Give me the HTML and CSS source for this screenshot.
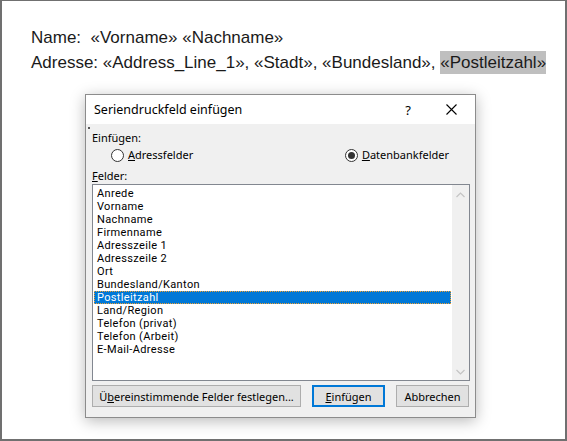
FILE: index.html
```html
<!DOCTYPE html>
<html lang="de">
<head>
    <meta charset="UTF-8">
    <title>Seriendruckfeld einfügen</title>
    <link rel="stylesheet" href="styles.css">
</head>
<body>

    <div id="page">
        <div class="doc-line">Name:&nbsp;&nbsp;«Vorname» «Nachname»</div>
        <div class="doc-line">Adresse: «Address_Line_1», «Stadt», «Bundesland», <span class="field-hl">«Postleitzahl»</span></div>

        <div id="dialog">
            <div id="titlebar">
                <span class="title">Seriendruckfeld einfügen</span>
                <span class="help">?</span>
                <svg class="close" width="11" height="11" viewBox="0 0 11 11">
                    <path d="M0.5 0.5 L10.5 10.5 M10.5 0.5 L0.5 10.5" stroke="#000" stroke-width="1.1" fill="none"/>
                </svg>
            </div>

            <div id="dialog-body">
                <div class="grip"></div>
                <div class="group-label">Einfügen:</div>
                <div class="radio-row">
                    <label class="radio"><span class="circle"></span><u>A</u>dressfelder</label>
                    <label class="radio"><span class="circle checked"></span><u>D</u>atenbankfelder</label>
                </div>

                <div class="group-label fields-label"><u>F</u>elder:</div>
                <div id="listbox">
                    <div class="items">
                        <div class="item">Anrede</div>
                        <div class="item">Vorname</div>
                        <div class="item">Nachname</div>
                        <div class="item">Firmenname</div>
                        <div class="item">Adresszeile 1</div>
                        <div class="item">Adresszeile 2</div>
                        <div class="item">Ort</div>
                        <div class="item">Bundesland/Kanton</div>
                        <div class="item selected">Postleitzahl</div>
                        <div class="item">Land/Region</div>
                        <div class="item">Telefon (privat)</div>
                        <div class="item">Telefon (Arbeit)</div>
                        <div class="item">E-Mail-Adresse</div>
                    </div>
                    <div class="scrollbar">
                        <svg width="9" height="6" viewBox="0 0 9 6"><path d="M0.5 5 L4.5 1 L8.5 5" stroke="#c4c4c4" stroke-width="1.2" fill="none"/></svg>
                        <svg width="9" height="6" viewBox="0 0 9 6"><path d="M0.5 1 L4.5 5 L8.5 1" stroke="#c4c4c4" stroke-width="1.2" fill="none"/></svg>
                    </div>
                </div>

                <div class="buttons">
                    <button class="btn btn-wide">Ü<u>b</u>ereinstimmende Felder festlegen...</button>
                    <button class="btn btn-default"><u>E</u>infügen</button>
                    <button class="btn">Abbrechen</button>
                </div>
            </div>
        </div>
    </div>

</body>
</html>
```

FILE: styles.css
```css
body {
    margin: 0;
    padding: 0;
    background-color: #fff;
}

#page {
    width: 567px;
    height: 441px;
    box-sizing: border-box;
    border: 2px solid #707070;
    border-top-width: 1px;
    padding: 24px 0 0 29px;
    font-family: 'Liberation Sans', Arial, sans-serif;
}

.doc-line {
    font-size: 17px;
    line-height: 25px;
    color: #1a1a1a;
    white-space: nowrap;
}

.field-hl {
    background-color: #bfbfbf;
    padding: 2px 0;
}

#dialog {
    width: 391px;
    height: 324px;
    box-sizing: border-box;
    margin: 19px 0 0 54px;
    border: 1px solid #8c8c8c;
    background-color: #f0f0f0;
    box-shadow: 0 3px 14px rgba(0, 0, 0, 0.28);
    font-family: 'Noto Sans', 'Open Sans', sans-serif;
    color: #000;
}

#titlebar {
    height: 29px;
    background-color: #fff;
    display: flex;
    align-items: center;
    padding-left: 8px;
}

#titlebar .title {
    font-size: 12.5px;
    flex: 1;
}

#titlebar .help {
    font-size: 13px;
    margin-right: 35px;
}

#titlebar .close {
    margin-right: 18px;
}

#dialog-body {
    padding: 0 5px 0 6px;
    position: relative;
    font-size: 11px;
}

.grip {
    width: 2px;
    height: 2px;
    background-color: #555;
    position: absolute;
    left: 2px;
    top: 3px;
}

.group-label {
    padding-top: 7px;
    line-height: 14px;
}

.radio-row {
    display: flex;
    justify-content: space-between;
    padding: 3px 21px 0 19px;
    line-height: 14px;
}

.radio {
    display: flex;
    align-items: center;
}

.circle {
    width: 11px;
    height: 11px;
    border: 1px solid #333;
    border-radius: 50%;
    margin-right: 4px;
    box-sizing: content-box;
    display: flex;
    align-items: center;
    justify-content: center;
    background-color: #fff;
}

.circle.checked::after {
    content: "";
    width: 7px;
    height: 7px;
    border-radius: 50%;
    background-color: #333;
}

.fields-label {
    padding-top: 7px;
}

#listbox {
    margin-top: 1px;
    height: 197px;
    box-sizing: border-box;
    border: 1px solid #828790;
    background-color: #fff;
    display: flex;
}

.items {
    flex: 1;
    padding: 2px 1px 0 1px;
}

/* Roboto keeps each 13px row free of the next one's glyph box */
.item {
    height: 13px;
    line-height: 13px;
    padding-left: 3px;
    font-family: Roboto, 'Noto Sans', sans-serif;
    font-size: 11px;
    letter-spacing: 0.35px;
}

.item.selected {
    background-color: #0078d7;
    color: #fff;
    outline: 1px dotted #f0a030;
    outline-offset: -1px;
}

.scrollbar {
    width: 17px;
    background-color: #f0f0f0;
    display: flex;
    flex-direction: column;
    justify-content: space-between;
    align-items: center;
    padding: 7px 0 5px;
}

.buttons {
    display: flex;
    margin-top: 4px;
    gap: 11px;
}

.btn {
    height: 22px;
    padding: 0 6px;
    font-family: 'Noto Sans', 'Open Sans', sans-serif;
    font-size: 11px;
    background-color: #e1e1e1;
    border: 1px solid #adadad;
    color: #000;
    width: 73px;
}

.btn-wide {
    width: 209px;
}

.btn-default {
    border: 2px solid #0078d7;
}
```
